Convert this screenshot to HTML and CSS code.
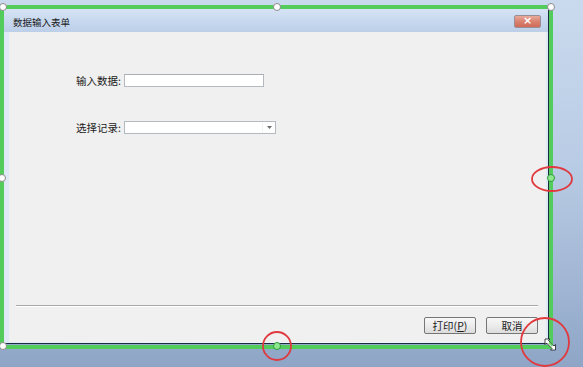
FILE: index.html
```html
<!DOCTYPE html>
<html lang="zh">
<head>
<meta charset="utf-8">
<title>数据输入表单</title>
<link rel="stylesheet" href="styles.css">
</head>
<body>
<div class="desktop">
  <div class="dialog">
    <div class="titlebar">
      <span class="title">数据输入表单</span>
      <span class="close">×</span>
    </div>
    <div class="client-wrap">
      <div class="client">
        <div class="form">
          <label class="label">输入数据:</label>
          <div class="textbox"></div>
          <label class="label row2">选择记录:</label>
          <div class="combo row2">
            <span class="combo-text"></span>
            <span class="combo-btn"><svg width="5" height="3" viewBox="0 0 5 3"><path d="M0 0H5L2.5 3Z" fill="#6d6d6d"/></svg></span>
          </div>
        </div>
        <div class="spacer"></div>
        <div class="separator"></div>
        <div class="buttons">
          <button class="btn">打印(<u>P</u>)</button>
          <button class="btn">取消</button>
        </div>
      </div>
    </div>
  </div>
  <div class="selection"></div>
  <svg class="overlay" width="583" height="367" viewBox="0 0 583 367">
    <g fill="#ffffff" stroke="#8a8a8a" stroke-width="1">
      <circle cx="3" cy="7" r="3.5"/>
      <circle cx="277" cy="7" r="3.5"/>
      <circle cx="551" cy="7" r="3.5"/>
      <circle cx="2" cy="178" r="3.5"/>
      <circle cx="3" cy="346" r="3.5"/>
    </g>
    <g fill="#8ee88e" stroke="#2f9a3a" stroke-width="1">
      <circle cx="551" cy="178" r="3.5"/>
      <circle cx="277" cy="346" r="3.5"/>
    </g>
    <g fill="none" stroke="#e0393e" stroke-width="1.8">
      <ellipse cx="552" cy="179" rx="20" ry="12"/>
      <circle cx="277" cy="346" r="14"/>
      <circle cx="545" cy="342" r="24"/>
    </g>
    <g stroke="#1a1a1a" stroke-width="0.8" stroke-linejoin="round">
      <path d="M545 339 L550 339 L548.5 340.5 L554 346 L555.5 344.5 L555.5 350 L550.5 350 L552 348.5 L546.5 343 L545 344.5 Z" fill="#ffffff"/>
      <path d="M549 342.5 L552.5 346" stroke="#6fd36f" stroke-width="2"/>
    </g>
  </svg>
</div>
</body>
</html>
```

FILE: styles.css
```css
html, body {
  margin: 0;
  padding: 0;
}

body {
  width: 583px;
  height: 367px;
  overflow: hidden;
  font-family: "Noto Sans CJK SC", "Liberation Sans", sans-serif;
}

.desktop {
  position: relative;
  width: 583px;
  height: 367px;
  overflow: hidden;
  background: linear-gradient(180deg, #cadaee 0%, #b9cce5 45%, #9fb4d2 80%, #8ea5c6 100%);
}

.dialog {
  position: absolute;
  left: 4px;
  top: 9px;
  width: 545px;
  height: 335px;
  box-sizing: border-box;
  display: flex;
  flex-direction: column;
  border-right: 1px solid #1c2c40;
  border-bottom: 1px solid #1c2c40;
  background: #d9e5f4;
}

.titlebar {
  height: 23px;
  flex: none;
  display: flex;
  align-items: flex-start;
  justify-content: space-between;
  padding: 0 7px 0 9px;
  background: linear-gradient(180deg, #d6e3f4 0%, #c8d9ef 50%, #bccfe8 100%);
}

.title {
  font-size: 9.5px;
  line-height: 12px;
  margin-top: 7px;
  color: #1b1b1b;
}

.close {
  width: 27px;
  height: 13px;
  margin-top: 6px;
  box-sizing: border-box;
  border: 1px solid #9a8f98;
  border-radius: 2px;
  background: linear-gradient(180deg, #e9a99b 0%, #d9826f 50%, #cf6c58 100%);
  color: #ffffff;
  font-family: "DejaVu Sans", sans-serif;
  font-size: 11px;
  line-height: 10px;
  text-align: center;
  font-weight: bold;
}

.client-wrap {
  flex: 1;
  display: flex;
  padding: 0 2px 1px 5px;
  background: linear-gradient(90deg, #dfe9f6 0%, #f4f8fc 60%, #dfe9f6 100%);
}

.client {
  flex: 1;
  display: flex;
  flex-direction: column;
  background: #f0f0f0;
}

.form {
  display: grid;
  grid-template-columns: 112px 152px;
  grid-template-rows: 13px 13px;
  row-gap: 34px;
  column-gap: 3px;
  align-items: center;
  padding-top: 42px;
}

.label {
  font-size: 10.5px;
  line-height: 13px;
  text-align: right;
  color: #1b1b1b;
}

.textbox {
  width: 140px;
  height: 13px;
  box-sizing: border-box;
  border: 1px solid #b4b8bf;
  border-top-color: #a9adb5;
  background: #ffffff;
}

.combo {
  width: 152px;
  height: 13px;
  box-sizing: border-box;
  display: flex;
  border: 1px solid #b4b8bf;
  background: #ffffff;
}

.combo-text {
  flex: 1;
}

.combo-btn {
  width: 12px;
  display: flex;
  align-items: center;
  justify-content: center;
  border-left: 1px solid #f2f2f2;
}

.spacer {
  flex: 1;
}

.separator {
  height: 1px;
  margin: 0 8px 0 7px;
  background: #a8a8a8;
  border-bottom: 1px solid #ffffff;
}

.buttons {
  display: flex;
  justify-content: flex-end;
  gap: 10px;
  padding: 10px 8px 8px 0;
}

.btn {
  width: 52px;
  height: 17px;
  box-sizing: border-box;
  padding: 0;
  margin: 0;
  border: 1px solid #767676;
  border-radius: 2px;
  background: linear-gradient(180deg, #f7f7f7 0%, #ececec 50%, #dcdcdc 100%);
  font-family: "Noto Sans CJK SC", "Liberation Sans", sans-serif;
  font-size: 10.5px;
  line-height: 14px;
  color: #1b1b1b;
}

.selection {
  position: absolute;
  left: 0;
  top: 5px;
  width: 553px;
  height: 344px;
  box-sizing: border-box;
  border: 4px solid #52cd5c;
  pointer-events: none;
}

.overlay {
  position: absolute;
  left: 0;
  top: 0;
  pointer-events: none;
}
```
